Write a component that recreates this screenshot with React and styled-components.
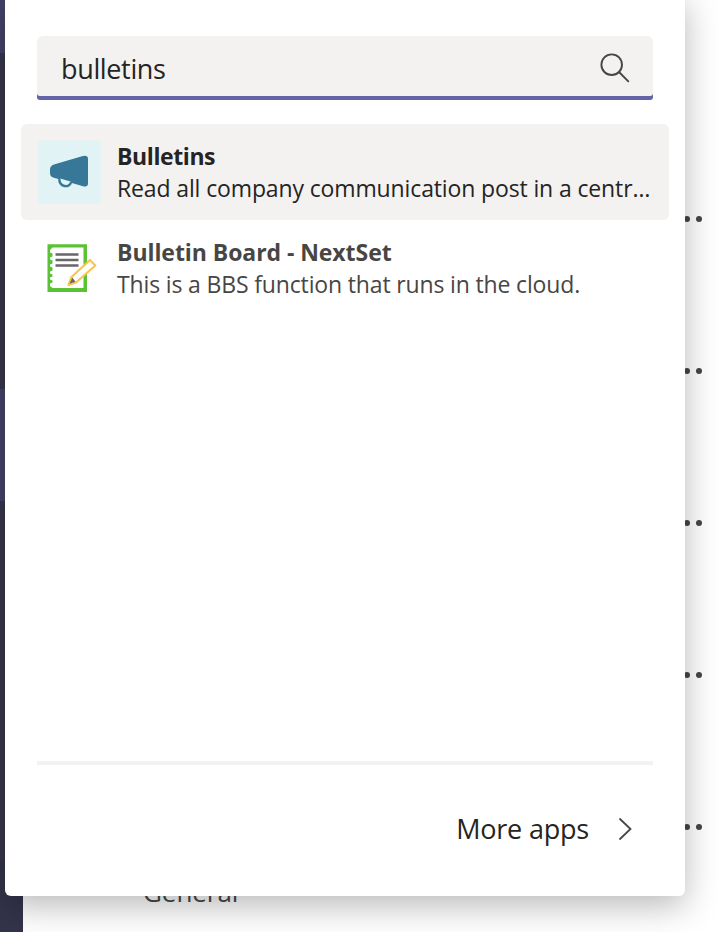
import React from "react";
import styled, { createGlobalStyle } from "styled-components";

const GlobalStyle = createGlobalStyle`
  * { box-sizing: border-box; }
  body { margin: 0; overflow: hidden; font-family: "Open Sans", "Noto Sans", sans-serif; }
`;

const Page = styled.div`
  position: relative;
  display: flex;
  width: 719px;
  height: 932px;
  overflow: hidden;
  background: #fff;
`;

const Rail = styled.nav`
  display: flex;
  flex-direction: column;
  width: 23px;
  background: #33344a;
`;

const RailItem = styled.div`
  height: ${(p) => p.$height}px;
  background: ${(p) => (p.$active ? "#42436a" : "#38374c")};
`;

const Channels = styled.main`
  display: flex;
  flex: 1;
  flex-direction: column;
  padding: 143px 17px 0 0;
`;

const ChannelRow = styled.div`
  display: flex;
  flex: none;
  align-items: center;
  justify-content: flex-end;
  height: 152px;
`;

const MoreDots = styled.svg`
  display: block;
  width: 30px;
  height: 6px;
  fill: #484644;
`;

const ChannelName = styled.div`
  margin: -29px 0 0 120px;
  color: #484644;
  font-size: 26px;
  line-height: 36px;
  letter-spacing: -0.05px;
`;

const Popup = styled.section`
  position: absolute;
  top: -8px;
  left: 5px;
  display: flex;
  flex-direction: column;
  width: 680px;
  height: 904px;
  padding: 44px 16px 0;
  border-radius: 6px;
  background: #fff;
  box-shadow: 0 10px 34px rgba(0, 0, 0, 0.28);
`;

const SearchBox = styled.div`
  display: flex;
  flex: none;
  align-items: center;
  justify-content: space-between;
  height: 64px;
  margin: 0 16px 24px;
  padding: 2px 23px 0 24px;
  border-radius: 6px 6px 3px 3px;
  background: #f3f2f1;
  box-shadow: inset 0 -4px #6264a7;
`;

const Query = styled.span`
  color: #252423;
  font-size: 27px;
  line-height: 36px;
  letter-spacing: ${(p) => p.$spacing}px;
  white-space: nowrap;
`;

const SearchIcon = styled.svg`
  width: 30px;
  height: 30px;
  margin-bottom: 2px;
  fill: none;
  stroke: #484644;
  stroke-width: 1.9;
  stroke-linecap: round;
`;

const Result = styled.article`
  display: flex;
  flex: none;
  align-items: center;
  gap: 16px;
  height: 96px;
  padding: 0 16px;
  border-radius: 6px;
  color: ${(p) => (p.$selected ? "#252423" : "#484644")};
  background: ${(p) => (p.$selected ? "#f3f2f1" : "transparent")};
`;

const AppIcon = styled.svg`
  flex: none;
  width: 64px;
  height: 64px;
`;

const ResultText = styled.div`
  display: flex;
  flex-direction: column;
  white-space: nowrap;
`;

const Title = styled.strong`
  font-size: 23px;
  font-weight: 700;
  line-height: 32px;
  letter-spacing: ${(p) => p.$spacing}px;
`;

const Description = styled.span`
  font-size: 23px;
  line-height: 32px;
  letter-spacing: ${(p) => p.$spacing}px;
`;

const Footer = styled.footer`
  display: flex;
  align-items: center;
  justify-content: flex-end;
  gap: 30px;
  height: 135px;
  margin: auto 16px 0;
  padding: 0 21px 4px 0;
  border-top: 4px solid #f3f2f1;
`;

const Chevron = styled.svg`
  width: 13px;
  height: 22px;
  fill: none;
  stroke: #484644;
  stroke-width: 1.8;
  stroke-linecap: round;
`;

function MegaphoneIcon() {
  return (
    <AppIcon viewBox="0 0 64 64">
      <rect x="0.8" y="0.5" width="63" height="63" rx="3" fill="#e1f3f4" />
      <path
        d="M17 24.5 45 16.2Q51 14.8 51 19V43.5Q51 47.5 46 46.2L16 37.5Q13 36.5 13 33V29.5Q13 25.8 17 24.5Z"
        fill="#377797"
      />
      <path
        d="M22.3 38.3C22 47.500 32.500 48.500 34.300 41.800"
        fill="#e1f3f4"
        stroke="#377797"
        strokeWidth="2.400"
      />
    </AppIcon>
  );
}

function NotebookIcon() {
  return (
    <AppIcon viewBox="0 0 64 64">
      <path fill="#5bc236" d="M10.500 8.300H50V56H10.500Z" />
      <path
        fill="#fff"
        d="M15.500 11.500H46.500V52H15.500L13 50V47.500L15.500 46.500V44.500L13 43.500V41.500L15.500 40.500V38.500L13 37.500V35.500L15.500 34.500V31.500L13 30.500V28.500L15.500 27.500V24.500L13 23.500V21.500L15.500 20.500V17.500L13 16.500V14Z"
      />
      <path d="M18.500 18.500H41.500M18.500 24H41.500M18.500 29.500H41.500" stroke="#68666a" strokeWidth="2.400" />
      <path
        d="M53 24 58.300 29.500 39 46.500 31.500 49 34.500 41Z"
        fill="#fff"
        stroke="#f8c650"
        strokeWidth="2.200"
        strokeLinejoin="round"
      />
      <path d="M35.300 41.500 38.500 45.700 32.500 47.800Z" fill="#69665f" />
    </AppIcon>
  );
}

const rows = [1, 2, 3, 4, 5];

const results = [
  {
    title: "Bulletins",
    description: "Read all company communication post in a centr…",
    Icon: MegaphoneIcon,
    selected: true,
    titleSpacing: -0.4,
    textSpacing: -0.13,
  },
  {
    title: "Bulletin Board - NextSet",
    description: "This is a BBS function that runs in the cloud.",
    Icon: NotebookIcon,
    selected: false,
    titleSpacing: -0.06,
    textSpacing: -0.15,
  },
];

export default function App() {
  return (
    <>
      <GlobalStyle />
      <Page>
        <Rail>
          <RailItem $active $height={53} />
          <RailItem $height={336} />
          <RailItem $active $height={112} />
          <RailItem $height={360} />
        </Rail>
        <Channels>
          {rows.map((row) => (
            <ChannelRow key={row}>
              <MoreDots viewBox="0 0 30 6">
                <circle cx="3" cy="3" r="3" />
                <circle cx="15" cy="3" r="3" />
                <circle cx="27" cy="3" r="3" />
              </MoreDots>
            </ChannelRow>
          ))}
          <ChannelName>General</ChannelName>
        </Channels>
        <Popup>
          <SearchBox>
            <Query $spacing={-0.35}>bulletins</Query>
            <SearchIcon viewBox="0 0 30 30">
              <circle cx="11.700" cy="11.700" r="10.300" />
              <path d="m19 19 9.300 9.300" />
            </SearchIcon>
          </SearchBox>
          {results.map(({ title, description, Icon, selected, titleSpacing, textSpacing }) => (
            <Result key={title} $selected={selected}>
              <Icon />
              <ResultText>
                <Title $spacing={titleSpacing}>{title}</Title>
                <Description $spacing={textSpacing}>{description}</Description>
              </ResultText>
            </Result>
          ))}
          <Footer>
            <Query as="a" $spacing={-0.2}>More apps</Query>
            <Chevron viewBox="0 0 13 22">
              <path d="m1 1 10.500 10L1 21" />
            </Chevron>
          </Footer>
        </Popup>
      </Page>
    </>
  );
}
